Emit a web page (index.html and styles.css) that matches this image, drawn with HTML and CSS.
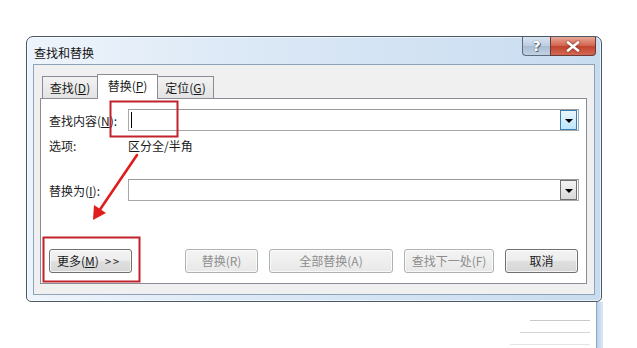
FILE: index.html
```html
<!DOCTYPE html>
<html lang="zh-CN">
<head>
<meta charset="utf-8">
<title>查找和替换</title>
<link rel="stylesheet" href="styles.css">
</head>
<body>
<div class="stage">
  <div class="window">
    <div class="titlebar">
      <span class="title">查找和替换</span>
      <div class="caption-btns">
        <div class="cbtn help">?</div>
        <div class="cbtn close">
          <svg width="14" height="11" viewBox="0 0 14 11"><path d="M2 1.5 L12 9.5 M12 1.5 L2 9.5" stroke="#fff" stroke-width="2.6" stroke-linecap="round"/></svg>
        </div>
      </div>
    </div>
    <div class="client">
      <div class="tabs">
        <div class="tab t1">查找(<u>D</u>)</div>
        <div class="tab active">替换(<u>P</u>)</div>
        <div class="tab t3">定位(<u>G</u>)</div>
      </div>
      <div class="panel">
        <div class="row row-find">
          <label class="lbl">查找内容(<u>N</u>):</label>
          <div class="combo">
            <span class="caret"></span>
            <div class="drop hot"><span class="tri"></span></div>
          </div>
        </div>
        <div class="row row-opt">
          <span class="lbl">选项:</span>
          <span class="opt">区分全/半角</span>
        </div>
        <div class="row row-repl">
          <label class="lbl">替换为(<u>I</u>):</label>
          <div class="combo">
            <div class="drop"><span class="tri"></span></div>
          </div>
        </div>
        <div class="buttons">
          <div class="btn more">更多(<u>M</u>)<span class="gt">&gt;&gt;</span></div>
          <div class="btn-group">
            <div class="btn dis w73">替换(R)</div>
            <div class="btn dis w124">全部替换(A)</div>
            <div class="btn dis w90">查找下一处(F)</div>
            <div class="btn w73">取消</div>
          </div>
        </div>
      </div>
    </div>
  </div>
  <div class="behind">
    <div class="smudge s1"></div>
    <div class="smudge s2"></div>
    <div class="smudge s3"></div>
  </div>
  <svg class="annot" width="637" height="348" viewBox="0 0 637 348">
    <rect x="110.5" y="101.5" width="67" height="35" fill="none" stroke="#c0232b" stroke-width="2"/>
    <rect x="43.5" y="237.5" width="96" height="44" fill="none" stroke="#c0232b" stroke-width="2"/>
    <line x1="137" y1="155" x2="99" y2="211" stroke="#e01e1e" stroke-width="2.6" stroke-linecap="round"/>
    <polygon points="93,220 94,205 106,213" fill="#e01e1e"/>
  </svg>
</div>
</body>
</html>
```

FILE: styles.css
```css
* { box-sizing: border-box; }
html, body {
  margin: 0;
  padding: 0;
  background: #ffffff;
  width: 637px;
  height: 348px;
  overflow: hidden;
  font-family: "Noto Sans CJK SC", "Microsoft YaHei", sans-serif;
  font-size: 12px;
  color: #1a1a1a;
}
.stage {
  position: relative;
  width: 637px;
  height: 348px;
  padding: 36px 0 0 26px;
}
.window {
  width: 576px;
  height: 266px;
  border: 1px solid #4b5866;
  border-radius: 7px 7px 5px 5px;
  background: linear-gradient(to right, #eef4fb 0%, #dbe8f6 40%, #c8dcf0 100%);
  display: flex;
  flex-direction: column;
  padding: 0 6px 6px 6px;
  box-shadow: inset 0 0 0 1px rgba(255,255,255,0.6);
}
.titlebar {
  height: 27px;
  display: flex;
  align-items: flex-start;
  justify-content: space-between;
}
.title {
  margin-top: 8px;
  margin-left: 1px;
  line-height: 16px;
  color: #111;
}
.caption-btns {
  display: flex;
  margin-right: -1px;
}
.cbtn {
  height: 19px;
  display: flex;
  align-items: center;
  justify-content: center;
  border: 1px solid #5c6b7d;
  border-top: none;
}
.help {
  width: 28px;
  border-radius: 0 0 0 4px;
  background: linear-gradient(#d8e3ef 0%, #bccde0 50%, #a9bcd2 51%, #c2d2e4 100%);
  color: #fff;
  font-family: "DejaVu Sans", sans-serif;
  font-weight: bold;
  font-size: 14px;
  text-shadow: 0 0 1px #44556a, 1px 1px 0 #5b6c80;
  border-right: none;
}
.close {
  width: 46px;
  border-radius: 0 0 4px 0;
  background: linear-gradient(#e8a796 0%, #d2614d 50%, #c2422f 51%, #d26a52 100%);
  border-color: #6b3a36;
}
.close svg { filter: drop-shadow(0 0 1px #6a1f18); }
.client {
  flex: 1;
  background: #f0f0f0;
  border: 1px solid #8ea3b8;
  padding: 9px 7px 10px 6px;
  display: flex;
  flex-direction: column;
}
.tabs {
  display: flex;
  align-items: flex-end;
  height: 24px;
  padding-left: 2px;
  position: relative;
  z-index: 1;
}
.tab {
  height: 22px;
  padding: 0;
  border: 1px solid #898c95;
  border-bottom: none;
  background: linear-gradient(#f2f2f2, #e3e3e3);
  line-height: 21px;
  color: #1a1a1a;
  white-space: nowrap;
  display: flex;
  justify-content: center;
}
.t1 { width: 55px; border-right: none; }
.t3 { width: 56px; border-left: none; }
.tab.active {
  height: 25px;
  width: 61px;
  background: #ffffff;
  margin-bottom: -1px;
  line-height: 22px;
}
u { text-decoration: underline; text-underline-offset: 1px; }
.panel {
  flex: 1;
  background: #ffffff;
  border: 1px solid #898c95;
  padding: 10px 7px 0 8px;
  display: flex;
  flex-direction: column;
}
.row {
  display: flex;
  align-items: center;
}
.lbl {
  width: 79px;
  flex: none;
  white-space: nowrap;
}
.combo {
  width: 452px;
  height: 22px;
  border: 1px solid #a8a8a8;
  border-top-color: #9a9a9a;
  display: flex;
  align-items: center;
  justify-content: space-between;
  padding: 1px 1px 1px 2px;
}
.caret {
  width: 1px;
  height: 16px;
  background: #000;
}
.drop {
  margin-left: auto;
  width: 17px;
  height: 20px;
  border: 1px solid #707070;
  background: linear-gradient(#f3f3f3, #dadada);
  display: flex;
  align-items: center;
  justify-content: center;
}
.drop.hot {
  border-color: #3c7fb1;
  background: linear-gradient(#eaf6fd, #bee6fd);
}
.tri {
  width: 0;
  height: 0;
  border-left: 4px solid transparent;
  border-right: 4px solid transparent;
  border-top: 4px solid #000;
  margin-top: 2px;
}
.row-opt {
  height: 16px;
  margin-top: 6px;
}
.row-repl { margin-top: 26px; }
.buttons {
  margin-top: 48px;
  display: flex;
  align-items: center;
}
.btn {
  height: 24px;
  border: 1px solid #707070;
  border-radius: 3px;
  background: linear-gradient(#f4f4f4 0%, #ececec 50%, #dfdfdf 51%, #d6d6d6 100%);
  box-shadow: inset 0 0 0 1px rgba(255,255,255,0.7);
  display: flex;
  align-items: center;
  justify-content: center;
  line-height: 16px;
  white-space: nowrap;
}
.btn.more {
  width: 83px;
  justify-content: flex-start;
  padding-left: 7px;
}
.gt {
  margin-left: 6px;
  letter-spacing: 2px;
  font-size: 11px;
}
.btn-group {
  display: flex;
  gap: 11px;
  margin-left: 53px;
}
.btn.dis {
  color: #8d8d8d;
  border-color: #adb2b5;
  background: linear-gradient(#f4f4f4, #e8e8e8);
}
.w73 { width: 73px; }
.w124 { width: 124px; }
.w90 { width: 90px; }
.behind {
  position: absolute;
  left: 480px;
  top: 302px;
  width: 123px;
  height: 46px;
}
.behind::after {
  content: "";
  position: absolute;
  right: 0;
  top: 0;
  width: 6px;
  height: 46px;
  background: linear-gradient(to right, #b9d2ea, #dbe9f7);
  border-left: 1px solid #8aa6c4;
}
.smudge {
  position: absolute;
  height: 1px;
  background: #777;
  opacity: 0.4;
}
.s1 { left: 50px; top: 18px; width: 60px; }
.s2 { left: 40px; top: 30px; width: 70px; opacity: 0.3; }
.s3 { left: 30px; top: 42px; width: 80px; opacity: 0.2; }
.annot {
  position: absolute;
  left: 0;
  top: 0;
  pointer-events: none;
}
```
